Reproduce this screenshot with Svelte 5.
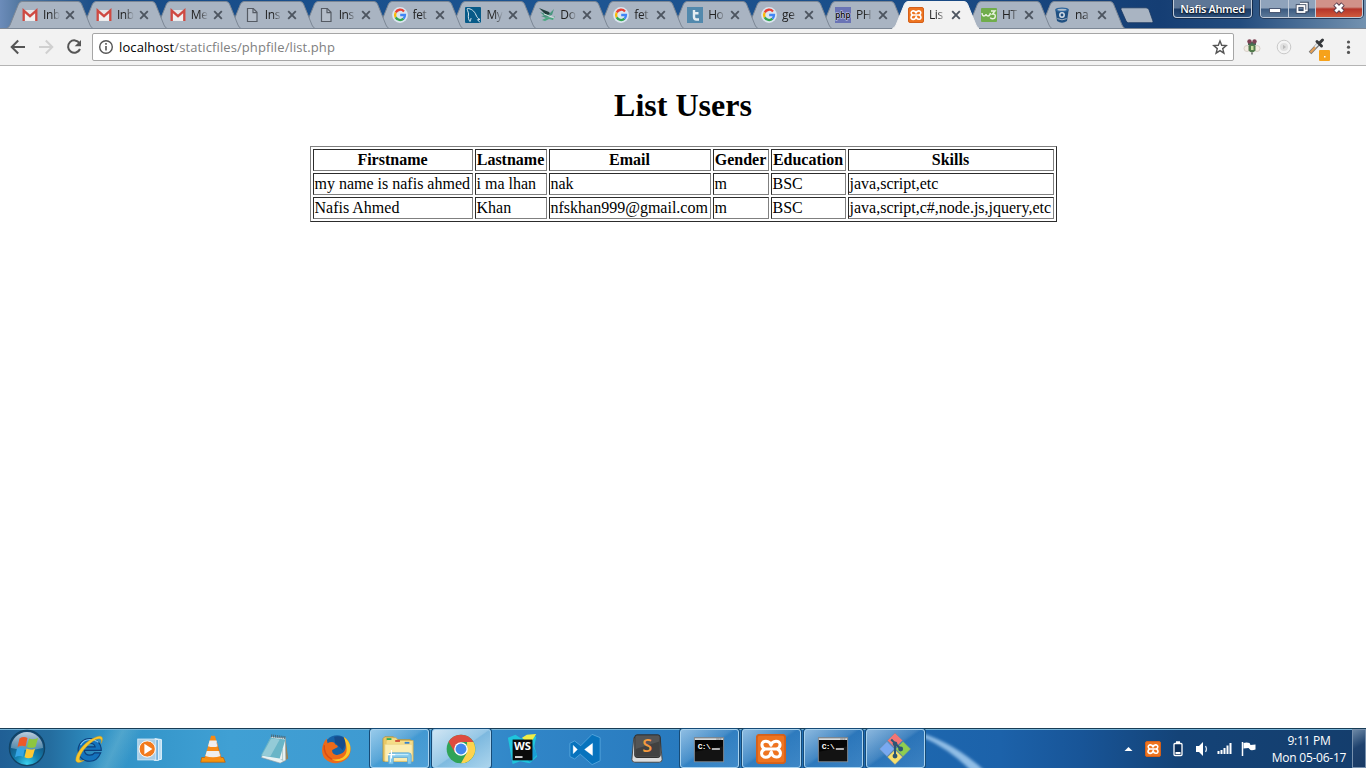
<script>
  const tabs = [
    { icon: 'gmail', title: 'Inb' },
    { icon: 'gmail', title: 'Inb' },
    { icon: 'gmail', title: 'Me' },
    { icon: 'page', title: 'Ins' },
    { icon: 'page', title: 'Ins' },
    { icon: 'google', title: 'fet' },
    { icon: 'mysql', title: 'My' },
    { icon: 'bird', title: 'Do' },
    { icon: 'google', title: 'fet' },
    { icon: 'tuts', title: 'Ho' },
    { icon: 'google', title: 'ge' },
    { icon: 'php', title: 'PH' },
    { icon: 'xampp', title: 'Lis', active: true },
    { icon: 'w3', title: 'HT' },
    { icon: 'bucket', title: 'na' }
  ];

  const columns = [
    { name: 'Firstname', width: 160 },
    { name: 'Lastname', width: 72 },
    { name: 'Email', width: 162 },
    { name: 'Gender', width: 56 },
    { name: 'Education', width: 75 },
    { name: 'Skills', width: 206 }
  ];
  const users = [
    ['my name is nafis ahmed', 'i ma lhan', 'nak', 'm', 'BSC', 'java,script,etc'],
    ['Nafis Ahmed', 'Khan', 'nfskhan999@gmail.com', 'm', 'BSC', 'java,script,c#,node.js,jquery,etc']
  ];

  const apps = [
    { icon: 'ie' },
    { icon: 'wmp' },
    { icon: 'vlc' },
    { icon: 'notepad' },
    { icon: 'firefox' },
    { icon: 'explorer', open: true },
    { icon: 'chrome', open: true, front: true },
    { icon: 'webstorm' },
    { icon: 'vscode' },
    { icon: 'sublime' },
    { icon: 'cmd', open: true },
    { icon: 'xamppBig', open: true },
    { icon: 'cmd', open: true },
    { icon: 'git', open: true }
  ];
</script>

{#snippet xamppMark()}
  <rect x=".5" y=".5" width="15" height="15" rx="1.5" fill="#ee7420" stroke="#d4601a" />
  <path d="M8 6C7.4 3.300 3.200 3.200 3.200 5.700 3.200 7 4 7.600 4.800 8 3.600 8.500 3 9.300 3 10.300 3 13 7.200 13 7.800 10.300L8.200 9.600C8.700 13 13 13 13 10.300 13 9.300 12.400 8.500 11.200 8 12 7.600 12.800 7 12.800 5.700 12.800 3.200 8.600 3.300 8 6M5 8h6" fill="none" stroke="#fff" stroke-width="1.6" stroke-linecap="round" stroke-linejoin="round" />
{/snippet}

{#snippet favicon(name)}
  <svg class="favicon" width="16" height="16" viewBox="0 0 16 16">
    {#if name === 'gmail'}
      <path d="M1 3h14v11H1z" fill="#e6e6e8" />
      <path d="M3 13.5V6l5 4 5-4v7.5z" fill="#f1f1f1" />
      <path d="M1.7 14V3.6L8 9.2l6.3-5.6V14" fill="none" stroke="#cf4a42" stroke-width="2.3" />
    {:else if name === 'page'}
      <path d="M3.500 1.500h5.800l3.700 3.800v9.200H3.500z" fill="#b4bdc9" stroke="#555b64" stroke-width="1.2" />
      <path d="M9 1.700v4h4" fill="none" stroke="#555b64" stroke-width="1.2" />
    {:else if name === 'google'}
      <circle cx="8" cy="8" r="7.9" fill="#dce6f0" />
      <g fill="none" stroke-width="2.3">
        <path d="M12 4.400A5 5 0 0 0 3.700 5.600" stroke="#e94235" />
        <path d="M3.700 5.600a5 5 0 0 0 0 4.800" stroke="#fabb05" />
        <path d="M3.700 10.400a5 5 0 0 0 7.800 1.300" stroke="#34a853" />
        <path d="M11.500 11.700A5 5 0 0 0 13 8H8.200" stroke="#4285f4" />
      </g>
    {:else if name === 'mysql'}
      <rect width="16" height="16" rx="1" fill="#075a88" />
      <path d="M2.500 1.500C6 1.500 9.500 4 11 8c.8 2 1.500 3 4 4.500l-2.500.2 2.500 2.800M2.500 1.500C1.500 2.500 3.500 4.500 3.500 7c-.5 3 0 6 1.500 7.500.9-.8.5-2.500 1.200-3.500" fill="none" stroke="#d8e7ee" stroke-width="1" />
    {:else if name === 'bird'}
      <path d="M0 1l10 4 2 3-4 1z" fill="#203d3b" />
      <path d="M1 5l8 3-4 .8zM2 9l10-1-5 3zM9 8l6-6-2 6z" fill="#49967f" />
      <path d="M3 13l6-3 4 1 3-2-2 4-4-1-4 2z" fill="#48a77f" />
      <path d="M5 7l8 3 2 1" stroke="#d8e5e4" fill="none" />
    {:else if name === 'tuts'}
      <rect width="16" height="16" fill="#5289ad" />
      <path d="M7 3v7q0 2.500 2.500 2.500H12M7 6.300h4.500" fill="none" stroke="#e5edf2" stroke-width="2.4" />
    {:else if name === 'php'}
      <rect width="16" height="16" fill="#6a74b5" />
      <text x="0.3" y="10.800" textLength="15.200" lengthAdjust="spacingAndGlyphs" font-family="Open Sans, sans-serif" font-size="9" font-weight="600" fill="#000" stroke="#d7d9ee" stroke-width="1.1" paint-order="stroke">php</text>
    {:else if name === 'xampp'}
      {@render xamppMark()}
    {:else if name === 'w3'}
      <rect width="16" height="14" y="1" rx="1" fill="#70ad4c" />
      <path d="M1 6q.2 3 2 3t2-2q.2 2 2 2t2.500-3M10 4h4l-2.500 3c4-.5 3.500 5-.2 4.800-1.200 0-1.800-.6-2-1.300" fill="none" stroke="#e7f2df" stroke-width="1.4" />
    {:else}
      <path d="M1.300 2.500L3 14q5 3.400 10 0l1.700-11.500z" fill="#205081" />
      <ellipse cx="8" cy="2.800" rx="6.700" ry="2.400" fill="#2c649b" />
      <ellipse cx="8" cy="2.700" rx="4.600" ry="1" fill="#aebdcc" />
      <circle cx="8" cy="8" r="2.200" fill="#205081" stroke="#d4dde6" stroke-width="1.5" />
      <path d="M3.300 11.600q4.700 2.500 9.400 0" stroke="#a9b4c2" fill="none" />
    {/if}
  </svg>
{/snippet}

{#snippet appIcon(name)}
  <svg class="app-icon" width="36" height="36" viewBox="0 0 36 36">
    {#if name === 'ie'}
      <path d="M31 19.500H13q.7 5 5.800 5 3.400 0 5-2.400h6.600C28 28 24 31 18.800 31 11.500 31 6.500 26 6.500 19S12 7 19 7s12 5 12 12.500zM13.200 15.700h11.300q-.8-3.800-5.500-3.800t-5.800 3.800z" fill="#1473bd" stroke="#0c3f7c" stroke-width="1.2" />
      <path d="M9 14q3-6 10-6 6 0 9 3" fill="none" stroke="#7cc5f1" stroke-width="1.3" />
      <path d="M31 12c4-9-2-9-9-5C12 12 4 23 4 30c1 4 6 2 9 0-4 1-6 0-5-3 2-7 10-15 17-19 5-2 7-1 6 4z" fill="#f7c72d" stroke="#d69b18" stroke-width=".5" />
    {:else if name === 'wmp'}
      <path d="M22 7l7 1v21l-7 1" fill="#b9dcf2" stroke="#eaf6fd" />
      <path d="M21 8h5v22h-5" fill="#75b2db" stroke="#e2f2fb" />
      <rect x="4" y="7.500" width="19" height="22" fill="#a9cde5" stroke="#d4e9f6" />
      <circle cx="14" cy="18" r="8.600" fill="#f27a1c" stroke="#fff" />
      <path d="M11 12.500l8.500 5.500-8.500 5.500z" fill="#fff" />
    {:else if name === 'vlc'}
      <path d="M6 27h23l2 5H5z" fill="#f6940e" stroke="#b95905" stroke-width=".7" />
      <path d="M16 4h4l7 24q-9 4-18 0z" fill="#f78a16" />
      <path d="M14.300 9h7.400l1.600 6q-5 2-10.600 0zM11.400 20h13.200l1.600 5.300q-8 3-16.400 0z" fill="#efeeee" />
      <path d="M22 11l4.500 16" stroke="#c66107" opacity=".5" />
    {:else if name === 'notepad'}
      <path d="M29 6l3 22-6 4z" fill="#9a8253" />
      <path d="M14 5l15 1 .5 24-6 3-20-6z" fill="#e8f2f3" stroke="#8a9da4" stroke-width=".7" />
      <path d="M13 6l16 2-6 20-20-3z" fill="#69b5c7" />
      <path d="M14 7l9 1-10 18-9-1z" fill="#a7d4de" opacity=".7" />
      <path d="M14 4l15 2" stroke="#4b6571" stroke-width="3" stroke-dasharray="1 1" />
      <path d="M26 18v12M24 29l3 1" stroke="#9bb" stroke-width=".7" />
    {:else if name === 'firefox'}
      <circle cx="18" cy="17.500" r="14" fill="#1662a8" />
      <path d="M15 5q11-2 13 6l-4 8-8-8z" fill="#174c8b" />
      <path d="M25 5c7 4 9 13 6 20-5 9-19 11-26 3-4-5-4-14 2-21l1 5q3-2 7-1l1 2q3 1 3 3l-6 3c-1 4 3 6 6 5 7-1 9-6 8-11 0-3 0-6-2-8z" fill="#ed6a1a" />
      <path d="M25 5c8 5 9 14 5 20-4 6-11 7-17 4 8 1 14-2 15-8 1-5-1-11-3-16z" fill="#fbc82a" />
      <path d="M4.500 14q-1 10 8 15" stroke="#d94d16" stroke-width="1.500" fill="none" />
    {:else if name === 'explorer'}
      <path d="M1 7l2-2h9l2 3h16v23H1z" fill="#e9c865" stroke="#af8b32" stroke-width=".7" />
      <path d="M5 9V6h10l2 3h16v22H4" fill="#f5dd88" stroke="#d0aa50" stroke-width=".7" />
      <path d="M5 6.500h5v2H5z" fill="#32ad55" /><path d="M14 8.500h5v2h-5z" fill="#cf4e36" /><path d="M24 10.500h5v2h-5z" fill="#3482d0" />
      <path d="M3 13h29v18H3z" fill="#fbedb2" stroke="#e3c978" stroke-width=".6" />
      <path d="M7 34V25q0-3 3-3h18q3 0 3 3v9h-4v-7H12v7z" fill="#83c9ec" stroke="#55a1d0" stroke-width=".7" />
      <path d="M9 32v-7q0-1 2-1h17" stroke="#d4f3ff" fill="none" />
      <path d="M10 19v9M6 24h8" stroke="#fff" stroke-width="1.200" />
    {:else if name === 'chrome'}
      <circle cx="18" cy="18" r="15.200" fill="#30a357" />
      <path d="M4.800 10.400A15.200 15.200 0 0 1 31.200 10.600H18L11.600 21.700z" fill="#de4b3f" />
      <path d="M31.200 10.600A15.200 15.200 0 0 1 18 33.200l6.400-11.500V10.600z" fill="#fdd34e" />
      <circle cx="18" cy="18" r="7.200" fill="#fff" /><circle cx="18" cy="18" r="5.800" fill="#4387ed" />
    {:else if name === 'webstorm'}
      <path d="M2 6l8-3 6 4 8-4 8 2-2 10 3 11-8 7-10-2-8 3z" fill="#1fc5dc" />
      <path d="M17 6l5-3 10-1-5 8v6z" fill="#f0ee47" />
      <path d="M27 12l6 12-8 8-5-6z" fill="#1a9ed7" />
      <rect x="7" y="8" width="21" height="22" fill="#0b0b0b" />
      <text x="8.500" y="19.500" textLength="18" lengthAdjust="spacingAndGlyphs" font-family="Open Sans, sans-serif" font-weight="700" font-size="12" fill="#fff">WS</text>
      <path d="M9.500 26.500h8" stroke="#fff" stroke-width="1.700" />
    {:else if name === 'vscode'}
      <path fill-rule="evenodd" d="M25.500 2.500L34 6v24.500l-8.500 4L13 23.500l-6 5-5-2.500V12l5-2.500 6.500 5zM26 12l-8.500 6.500L26 25zM5.500 14v9l4.500-4.500z" fill="#0873bd" stroke="#68b5e7" stroke-width=".7" />
      <path d="M26 12l-8.500 6.500L26 25zM5.500 14v9l4.500-4.500z" fill="#fff" />
    {:else if name === 'sublime'}
      <path d="M4 6l-2 23q0 3 3 3h26q3 0 3-3L32 6z" fill="#ddd" stroke="#444" />
      <rect x="5" y="3" width="27" height="24" rx="2.500" fill="#555" stroke="#292929" />
      <path d="M6 18l25-8v16H6z" fill="#414141" />
      <text x="13" y="21.500" font-family="Open Sans, sans-serif" font-weight="600" font-size="19" fill="#f59a3e">S</text>
    {:else if name === 'cmd'}
      <rect x="2.500" y="6" width="31" height="25.500" fill="#050505" stroke="#8a8f94" />
      <path d="M3 7.500h30" stroke="#d5dadd" stroke-width="2" />
      <path d="M26 7.500h6" stroke="#444" stroke-dasharray="1 1" />
      <path d="M3 21l30-6v16H3z" fill="#292929" opacity=".4" />
      <text x="6" y="18" font-family="Liberation Mono, monospace" font-weight="700" font-size="8.500" textLength="14" fill="#fff">C:\</text>
      <path d="M21 18h8.500" stroke="#fff" stroke-width="1.400" />
    {:else if name === 'xamppBig'}
      <g transform="translate(2 2)"><svg width="32" height="32" viewBox="0 0 16 16">{@render xamppMark()}</svg></g>
    {:else}
      <g stroke="#738696" stroke-width=".5">
        <path d="M18 1l8 8-8 8-8-8z" fill="#f37575" />
        <path d="M9.500 10L17.500 18l-8 8-8-8z" fill="#79a9f1" />
        <path d="M26.500 10l8 8-8 8-8-8z" fill="#8fce50" />
        <path d="M18 18.500l8 8-8 8-8-8z" fill="#f8df6d" />
      </g>
      <path d="M14 8l4 4v14M18 12l6 6" fill="none" stroke="#2c5574" stroke-width="2.200" />
      <circle cx="18" cy="12.500" r="2.500" fill="#2c5574" /><circle cx="24" cy="18" r="2.600" fill="#2c5574" /><circle cx="18" cy="25.500" r="2.600" fill="#2c5574" />
    {/if}
  </svg>
{/snippet}

<div class="screen">
  <header class="titlebar">
    <div class="tabs">
      {#each tabs as tab, i}
        <div class="tab" class:active={tab.active} class:narrow={i > 10} style="z-index: {tab.active ? 30 : 20 - i}">
          <svg class="tab-shape" width="87" height="29" viewBox="0 0 87 29">
            <path d="M.5 28.500Q3 27.500 4 25L12.500 4Q13.800 1.500 16 1.500h56q2.500 0 3.500 2.500L84 25q1 2.500 3 3.500z" />
          </svg>
          {@render favicon(tab.icon)}
          <span class="tab-title">{tab.title}</span>
          <svg class="close" width="10" height="10" viewBox="0 0 10 10"><path d="M1.200 1.200l7.600 7.600M8.800 1.200L1.200 8.800" /></svg>
        </div>
      {/each}
    </div>
    <svg class="new-tab" width="34" height="17" viewBox="0 0 34 17"><path d="M2 .8h24q2 0 3 2l4 11.500q.3 1.400-1.300 1.400H8.500q-1.700 0-2.400-1.700L1 2.500Q.5.8 2 .8z" fill="#a9b4c2" stroke="#1b3962" stroke-width=".8" /></svg>
    <div class="window-controls">
      <div class="profile">Nafis Ahmed</div>
      <div class="buttons">
        <span class="wbtn"><svg width="27" height="17" viewBox="0 0 27 17"><rect x="8.500" y="8.500" width="11" height="4" fill="#fff" stroke="#4b5974" /></svg></span>
        <span class="wbtn"><svg width="26" height="17" viewBox="0 0 26 17"><path d="M11 3.500h7v7h-2" fill="none" stroke="#36445d" stroke-width="3.500" /><rect x="8.500" y="6" width="7" height="6" fill="none" stroke="#36445d" stroke-width="3.500" /><path d="M11 3.500h7v7h-2" fill="none" stroke="#fff" stroke-width="1.400" /><rect x="8.500" y="6" width="7" height="6" fill="none" stroke="#fff" stroke-width="1.800" /></svg></span>
        <span class="wbtn exit"><svg width="46" height="17" viewBox="0 0 46 17"><path d="M19 4l8 8M27 4l-8 8" stroke="#5c3f4f" stroke-width="5" /><path d="M19.500 4.500l7 7M26.500 4.500l-7 7" stroke="#fff" stroke-width="3" /></svg></span>
      </div>
    </div>
  </header>

  <div class="toolbar">
    <svg class="nav" width="92" height="36" viewBox="0 0 92 36">
      <g fill="none" stroke-width="2">
        <path d="M25 18H12M18.200 11.500L11.700 18l6.500 6.500" stroke="#555" />
        <path d="M39 18h13M45.800 11.500l6.500 6.500-6.500 6.500" stroke="#d0d0d0" />
        <path d="M79.500 14.200A6.200 6.200 0 1 0 80 20" stroke="#555" />
      </g>
      <path d="M81 11v6.300h-6.300z" fill="#555" />
    </svg>
    <div class="omnibox">
      <svg width="16" height="16" viewBox="0 0 16 16"><circle cx="8" cy="8" r="6.300" fill="none" stroke="#555" stroke-width="1.400" /><path d="M8 7v4.500M8 4v1.700" stroke="#555" stroke-width="1.600" /></svg>
      <span class="url"><b>localhost</b>/staticfiles/phpfile/list.php</span>
      <svg class="star" width="16" height="16" viewBox="0 0 16 16"><path d="M8 2l1.700 4.300 4.600.3-3.600 3 1.200 4.500L8 11.600l-3.900 2.500 1.200-4.500-3.600-3 4.600-.3z" fill="none" stroke="#555" stroke-width="1.400" /></svg>
    </div>
    <svg class="extensions" width="132" height="36" viewBox="0 0 132 36">
      <ellipse cx="13" cy="19.500" rx="3" ry="3" fill="#f5ece4" stroke="#d8d0c8" /><ellipse cx="23" cy="19.500" rx="3" ry="3" fill="#f5ece4" stroke="#d8d0c8" />
      <path d="M14 13h8v3h-8z" fill="#456b55" />
      <circle cx="15.500" cy="12.500" r="2.200" fill="#7d4153" /><circle cx="20.500" cy="12.500" r="2.200" fill="#7d4153" />
      <path d="M14.500 16.500q3.500-2 7 0v5q-3.500 4-7 0z" fill="#537b4c" /><path d="M17 17h2.500v4H17z" fill="#c8dd9c" /><path d="M18 23.500v2" stroke="#666" stroke-width="1.500" />
      <circle cx="50" cy="18" r="6.800" fill="#f4f4f4" stroke="#c9c9c9" /><circle cx="50" cy="18" r="4" fill="#e0e0e0" /><path d="M49 15.800l3 2.200-3 2.200z" fill="#bbb" />
      <path d="M76 24l9-9.500" stroke="#777" stroke-width="3.600" /><path d="M76.500 23.500l5-5.500" stroke="#e7a055" stroke-width="2" /><path d="M81 18l4-4" stroke="#e8edf0" stroke-width="2" />
      <path d="M83 12.500l4.500 4.500M85.500 14l3-3" stroke="#36393c" stroke-width="3" stroke-linecap="round" />
      <rect x="85" y="21" width="11" height="11" rx="1" fill="#f6a21b" /><rect x="90" y="27" width="1.500" height="1.500" fill="#fff" />
      <g fill="#555"><circle cx="114.500" cy="13" r="1.600" /><circle cx="114.500" cy="18.200" r="1.600" /><circle cx="114.500" cy="23.400" r="1.600" /></g>
    </svg>
  </div>

  <main>
    <h1>List Users</h1>
    <table>
      <colgroup>
        {#each columns as col}<col style="width: {col.width}px" />{/each}
      </colgroup>
      <thead>
        <tr>{#each columns as col}<th>{col.name}</th>{/each}</tr>
      </thead>
      <tbody>
        {#each users as row}
          <tr>{#each row as cell}<td>{cell}</td>{/each}</tr>
        {/each}
      </tbody>
    </table>
  </main>

  <footer class="taskbar">
    <div class="start">
      <svg width="40" height="38" viewBox="0 0 40 38">
        <defs>
          <radialGradient id="orb" cx=".5" cy=".95" r=".8"><stop offset="0" stop-color="#39d1ee" /><stop offset=".4" stop-color="#1583b2" /><stop offset="1" stop-color="#124672" /></radialGradient>
          <linearGradient id="shine" x2="0" y2="1"><stop offset="0" stop-color="#dbe8f2" stop-opacity=".85" /><stop offset="1" stop-color="#b9d1e3" stop-opacity=".35" /></linearGradient>
        </defs>
        <circle cx="20" cy="19" r="17.600" fill="url(#orb)" stroke="#114365" stroke-width="1.300" />
        <path d="M4 19a16 16 0 0 1 32 0q-16 4-32 0z" fill="url(#shine)" />
        <path d="M12.500 9.500q4-2.500 8-.5l-2 8.500q-4-1.500-8 .5z" fill="#ed5928" />
        <path d="M22 9.500q4 1.700 9-.5l-2.500 9q-4 1.700-8.500 0z" fill="#8dc63f" />
        <path d="M10 19.500q4-2 8-.3l-2 8.500q-3.700-1.700-8 .5z" fill="#35a4e4" />
        <path d="M19.500 19.500q4 2 8.500.2l-2.500 8.500q-4 2-8 0z" fill="#fdc834" />
      </svg>
    </div>
    <div class="apps">
      {#each apps as app}
        <div class="app" class:open={app.open} class:front={app.front}>{@render appIcon(app.icon)}</div>
      {/each}
    </div>
    <svg class="streak" width="76" height="39" viewBox="0 0 76 39">
      <defs><filter id="soft" x="-20%" y="-20%" width="140%" height="140%"><feGaussianBlur stdDeviation="1.600" /></filter></defs>
      <path d="M-8 3Q30 14 62 45L48 45Q25 20-8 6z" fill="#a5cdf0" opacity=".85" filter="url(#soft)" />
    </svg>
    <div class="tray">
      <svg width="142" height="24" viewBox="0 0 142 24">
        <path d="M4.500 14h8l-4-4z" fill="#fff" />
        <g transform="translate(25 4)">{@render xamppMark()}</g>
        <rect x="54" y="6.500" width="8" height="12" rx="1" fill="#0c305c" stroke="#fff" stroke-width="1.300" /><path d="M56 5.200h4M55.500 16h5" stroke="#fff" stroke-width="1.800" />
        <path d="M76 9h3l4-4v14l-4-4h-3z" fill="#fff" /><path d="M85.500 9q2 3 0 6" stroke="#d4e0ed" stroke-width="1.300" fill="none" />
        <path d="M98.500 14v3M101.500 13v4M104.500 11v6M107.500 8.500v8.500M110.500 6v11" stroke="#fff" stroke-width="2" />
        <path d="M122.500 5v14" stroke="#fff" stroke-width="1.500" /><path d="M123.500 6q3-1 6 0l1 2 5-.5v5q-3 1-5 .5l-2-2-5 .5z" fill="#fff" />
      </svg>
      <div class="clock"><span>9:11 PM</span><span>Mon 05-06-17</span></div>
      <div class="show-desktop"></div>
    </div>
  </footer>
</div>

<style>
  :global(body) { margin: 0; overflow: hidden; }
  .screen { width: 1366px; height: 768px; display: flex; flex-direction: column; background: #fff; overflow: hidden; }

  .titlebar {
    height: 29px; flex: none; display: flex; align-items: flex-start; position: relative;
    background: linear-gradient(90deg, #6c8cba 0, #52779f 20px, #174b87 100px, #1d5592 600px, #1a4d88 900px, #153e74 1160px, #234c7e 1240px, #7392b0 1366px);
    box-shadow: inset 0 -1px #7d8794;
  }
  .tabs { display: flex; padding-left: 6px; }
  .tab { position: relative; width: 87px; height: 29px; margin-right: -13.1px; flex: none; display: flex; align-items: center; box-sizing: border-box; padding: 1px 0 0 16px; }
  .tab.narrow { margin-right: -14px; }
  .tab-shape { position: absolute; left: 0; top: 0; z-index: -1; }
  .tab-shape path { fill: #a9b4c2; stroke: #7c8795; }
  .active .tab-shape path { fill: #f2f2f2; stroke: #f2f2f2; }
  .favicon { flex: none; }
  .tab-title { width: 18px; margin-left: 5px; white-space: nowrap; font: 12px/16px "Open Sans", sans-serif; letter-spacing: -.4px; color: #222; mask-image: linear-gradient(90deg, #000 45%, transparent 95%); }
  .close { margin-left: 4px; flex: none; }
  .close path { stroke: #4d5560; stroke-width: 1.9; }
  .new-tab { margin: 7px 0 0 9px; }
  .window-controls { margin-left: auto; display: flex; gap: 8px; padding-right: 3px; }
  .profile {
    width: 79px; height: 18px; box-sizing: border-box; border: 1px solid #c1cbd8; border-top: 0; border-radius: 0 0 4px 4px;
    background: linear-gradient(#5d7696 0 8px, #1c3b65 9px, #2c507c); box-shadow: 0 0 0 1px #142c4d;
    font: 600 11px/18px "Open Sans", sans-serif; letter-spacing: -.35px; text-align: center; color: #fff; text-shadow: 0 1px 2px #000; white-space: nowrap;
  }
  .buttons { display: flex; height: 18px; box-sizing: border-box; border: 1px solid #c1cbd8; border-top: 0; border-radius: 0 0 4px 4px; overflow: hidden; box-shadow: 0 0 0 1px #243a59; }
  .wbtn { height: 17px; background: linear-gradient(#8fa3bb 0 8px, #3b5a80 9px, #5b7898); border-right: 1px solid #c1cbd8; }
  .wbtn svg { display: block; }
  .exit { border: 0; background: linear-gradient(#d19289 0 7px, #b5352a 9px, #cf5a3c); }

  .toolbar { height: 37px; flex: none; box-sizing: border-box; display: flex; align-items: center; background: #f2f2f2; border-bottom: 1px solid #b4b4b4; }
  .omnibox { width: 1142px; height: 28px; box-sizing: border-box; border: 1px solid #a6a6a6; border-radius: 2px; background: #fff; display: flex; align-items: center; padding: 0 5px; }
  .url { margin-left: 5px; font: 13px/20px "Open Sans", sans-serif; color: #808080; letter-spacing: .1px; }
  .url b { font-weight: 400; color: #000; }
  .star { margin-left: auto; }

  main { flex: 1; overflow: hidden; font: 16px "Liberation Serif", serif; color: #000; }
  h1 { margin: 21px 0 22px; font-size: 32px; line-height: 37px; text-align: center; }
  table { width: 747px; margin: 0 auto; position: relative; table-layout: fixed; border-collapse: separate; border-spacing: 2px; border: 1px solid; border-color: #808080 #2c2c2c #2c2c2c #808080; box-sizing: border-box; }
  th, td { height: 22px; box-sizing: border-box; padding: 1px; line-height: 18px; white-space: nowrap; border: 1px solid; border-color: #2c2c2c #808080 #808080 #2c2c2c; }

  .taskbar {
    height: 40px; flex: none; display: flex; box-sizing: border-box; border-top: 1px solid #183c55; box-shadow: inset 0 1px #76b4d8;
    background:
      linear-gradient(115deg, transparent 95px, #8cc9d855 112px, transparent 130px),
      linear-gradient(90deg, #205f95 0, #246d9f 50px, #2f91c5 100px, #40a0d4 230px, #3e99d1 400px, #3186c8 520px, #287abe 680px, #1f6bb2 850px, #1c62aa 1000px, #185598 1080px, #144377 1180px, #143d6c 1366px);
  }
  .start { width: 59px; display: flex; }
  .start svg { margin-left: 7px; }
  .apps { display: flex; gap: 3px; margin-left: .5px; }
  .app { width: 59px; height: 39px; box-sizing: border-box; display: flex; align-items: center; justify-content: center; }
  .app-icon { width: 34px; height: 34px; flex: none; }
  .open { border: 1px solid #a9d3ef; border-radius: 3px; background: linear-gradient(145deg, #d2eafb99 0, #8abce355 45%, #5fa6dd33 50%, #77b6e755); box-shadow: 0 0 0 1px #174b76; }
  .front { background: linear-gradient(145deg, #e7f2f9dd 0, #b8dcf0bb 50%, #a1cfe9aa 52%, #c9e7f5cc); }
  .streak { flex: none; margin-left: 1px; }
  .tray { margin-left: auto; display: flex; align-items: center; }
  .clock { width: 88px; padding-left: 3px; margin-right: -3px; display: flex; flex-direction: column; align-items: center; font: 12px/17px "Open Sans", sans-serif; letter-spacing: -.25px; color: #fff; white-space: nowrap; }
  .show-desktop { width: 14px; height: 39px; margin-left: 2px; box-sizing: border-box; border: 1px solid #7790ad; background: linear-gradient(150deg, #6b87a5, #1f426e 45%, #193a65); }
</style>
